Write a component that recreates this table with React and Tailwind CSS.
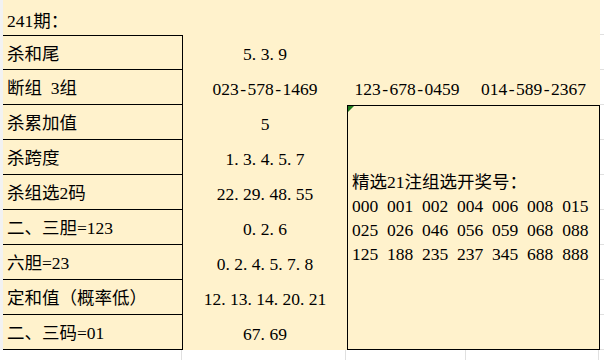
import React from "react";

function T({ s }) {
  const parts = [];
  let buf = "";
  const flush = (k) => {
    if (buf) {
      parts.push(<React.Fragment key={"t" + k}>{buf}</React.Fragment>);
      buf = "";
    }
  };
  [...s].forEach((c, i) => {
    if (c === ".") {
      flush(i);
      parts.push(
        <span key={i} className="tracking-[4.4px]">
          .
        </span>
      );
    } else if (c === "-") {
      flush(i);
      parts.push(
        <span key={i} className="mx-[1.45px]">
          -
        </span>
      );
    } else {
      buf += c;
    }
  });
  flush("end");
  return <>{parts}</>;
}

const rows = [
  ["杀和尾", "5.3.9"],
  ["断组 3组", "023-578-1469"],
  ["杀累加值", "5"],
  ["杀跨度", "1.3.4.5.7"],
  ["杀组选2码", "22.29.48.55"],
  ["二、三胆=123", "0.2.6"],
  ["六胆=23", "0.2.4.5.7.8"],
  ["定和值（概率低）", "12.13.14.20.21"],
  ["二、三码=01", "67.69"],
];

const picks = [
  "000 001 002 004 006 008 015",
  "025 026 046 056 059 068 088",
  "125 188 235 237 345 688 888",
];

export default function App() {
  return (
    <div
      className="relative w-[604px] h-[360px] overflow-hidden bg-white text-black text-[17.5px] leading-none [word-spacing:4.4px]"
      style={{ fontFamily: '"Liberation Serif", "Noto Sans CJK SC", serif' }}
    >
      <div className="flex">
        <div className="w-[3px] h-[350px] bg-[#f2f2f2]" />
        <div className="grid grid-cols-[180px_164px_120px_133px] grid-rows-[repeat(10,35px)] bg-[#fff2cc]">
          <div className="col-span-2 flex items-center pt-[8px] pl-[4px] whitespace-nowrap">
            <T s="241期：" />
          </div>
          <div className="col-span-2" />
          {rows.map(([a, b], i) => (
            <React.Fragment key={i}>
              <div
                className={
                  "col-start-1 flex items-center pt-[4px] pl-[4px] whitespace-nowrap border-r border-b border-black " +
                  (i === 0 ? "border-t" : "")
                }
                style={{ gridRowStart: i + 2 }}
              >
                <T s={a} />
              </div>
              <div
                className="col-start-2 flex items-center justify-center pt-[4px] whitespace-nowrap"
                style={{ gridRowStart: i + 2 }}
              >
                <T s={b} />
              </div>
            </React.Fragment>
          ))}
          <div className="col-start-3 row-start-3 flex items-center justify-center pt-[4px] whitespace-nowrap">
            <T s="123-678-0459" />
          </div>
          <div className="col-start-4 row-start-3 flex items-center justify-center pt-[4px] whitespace-nowrap">
            <T s="014-589-2367" />
          </div>
          <div className="relative col-start-3 col-span-2 row-start-4 row-span-7 border border-black flex flex-col justify-center pl-[4px] pb-[20px] leading-[24px] whitespace-nowrap">
            <div className="absolute left-0 top-0 w-0 h-0 border-t-[6px] border-t-[#1e7b1e] border-r-[6px] border-r-transparent" />
            <div>精选21注组选开奖号：</div>
            {picks.map((p) => (
              <div key={p}>{p}</div>
            ))}
          </div>
        </div>
        <div className="flex-1 h-[350px] flex flex-col">
          {Array.from({ length: 10 }).map((_, i) => (
            <div key={i} className="h-[35px] border-b border-[#e0e0e0]" />
          ))}
        </div>
      </div>
      <div className="flex h-[10px]">
        <div className="w-[182px] border-r border-[#e0e0e0]" />
        <div className="w-[164px] border-r border-[#e0e0e0]" />
        <div className="w-[120px] border-r border-[#e0e0e0]" />
        <div className="w-[133px] border-r border-[#e0e0e0]" />
      </div>
    </div>
  );
}
